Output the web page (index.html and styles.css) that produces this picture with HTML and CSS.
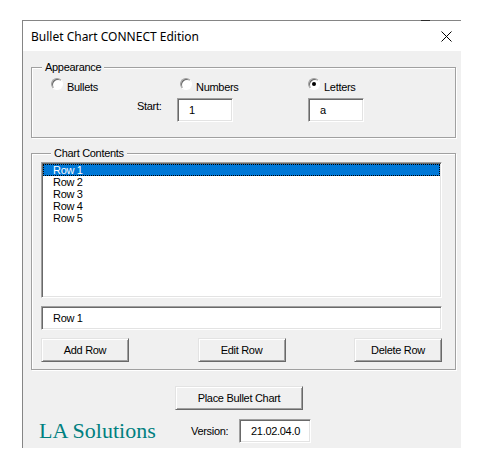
FILE: index.html
```html
<!DOCTYPE html>
<html>
<head>
<meta charset="utf-8">
<link rel="stylesheet" href="styles.css">
</head>
<body>
<div class="window">
  <div class="titlebar">
    <span class="title">Bullet Chart CONNECT Edition</span>
    <svg class="close" width="11" height="11" viewBox="0 0 11 11"><path d="M0.5 0.5L10.5 10.5M10.5 0.5L0.5 10.5" stroke="#000" stroke-width="1" fill="none"/></svg>
  </div>
  <div class="client">
    <fieldset class="group appearance">
      <legend>Appearance</legend>
      <div class="app-grid">
        <label class="radio r-bullets"><span class="circle"></span><span class="rlabel">Bullets</span></label>
        <label class="radio r-numbers"><span class="circle"></span><span class="rlabel">Numbers</span></label>
        <label class="radio r-letters"><span class="circle checked"></span><span class="rlabel">Letters</span></label>
        <span class="start-label">Start:</span>
        <span class="field f-start">1</span>
        <span class="field f-letters">a</span>
      </div>
    </fieldset>

    <fieldset class="group contents">
      <legend>Chart Contents</legend>
      <div class="listbox">
        <div class="item selected">Row 1</div>
        <div class="item">Row 2</div>
        <div class="item">Row 3</div>
        <div class="item">Row 4</div>
        <div class="item">Row 5</div>
      </div>
      <div class="field f-row">Row 1</div>
      <div class="btn-row">
        <button class="btn">Add Row</button>
        <button class="btn">Edit Row</button>
        <button class="btn">Delete Row</button>
      </div>
    </fieldset>

    <button class="btn place">Place Bullet Chart</button>

    <div class="footer">
      <span class="brand">LA Solutions</span>
      <span class="version-label">Version:</span>
      <span class="field f-version">21.02.04.0</span>
    </div>
  </div>
</div>
</body>
</html>
```

FILE: styles.css
```css
html, body {
  margin: 0;
  background: #ffffff;
}

body {
  font-family: "Liberation Sans", Arial, sans-serif;
  font-size: 11px;
  letter-spacing: -0.3px;
  color: #000;
}

.window {
  position: relative;
  margin: 20px 0 0 22px;
  width: 438px;
  height: 427px;
  border-top: 1px solid #858585;
  border-left: 1px solid #858585;
  display: flex;
  flex-direction: column;
}

.window::after {
  content: "";
  position: absolute;
  top: -1px;
  left: 398px;
  width: 9px;
  height: 1px;
  background: #2b2b2b;
}

.titlebar {
  height: 30px;
  flex: none;
  display: flex;
  align-items: center;
  justify-content: space-between;
  padding: 0 9px 0 8px;
  background: #fff;
}

.title {
  font-family: "Noto Sans", "Open Sans", sans-serif;
  font-size: 12px;
  letter-spacing: 0;
  color: #000;
}

.close {
  display: block;
}

.client {
  flex: 1;
  background: #f0f0f0;
  display: flex;
  flex-direction: column;
  align-items: flex-start;
  padding: 0 5px 0 8px;
}

.group {
  margin: 0;
  padding: 0;
  width: 425px;
  box-sizing: border-box;
  min-width: 0;
  border: 1px solid #a0a0a0;
  box-shadow: inset 1px 1px 0 #fff, 1px 1px 0 #fff;
}

.group legend {
  margin-left: 10px;
  padding: 0 3px;
  line-height: 13px;
  background: #f0f0f0;
}

.appearance {
  margin-top: 10px;
  height: 77px;
}

.app-grid {
  display: grid;
  grid-template-columns: 19px 86px 40px 131px 1fr;
  grid-template-rows: 13px 24px;
  row-gap: 7px;
  padding-top: 4px;
}

.radio {
  display: flex;
  align-items: flex-start;
  gap: 4px;
}

.r-bullets { grid-column: 2 / 4; grid-row: 1; }
.r-numbers { grid-column: 4; grid-row: 1; margin-left: 3px; }
.r-letters { grid-column: 5; grid-row: 1; }

.circle {
  width: 12px;
  height: 12px;
  box-sizing: border-box;
  border-radius: 50%;
  border: 1px solid;
  border-color: #a0a0a0 #ffffff #ffffff #a0a0a0;
  box-shadow: inset 1px 1px 0 #696969;
  background: #fff;
  flex: none;
  display: flex;
  align-items: center;
  justify-content: center;
}

.circle.checked::before {
  content: "";
  width: 4px;
  height: 4px;
  border-radius: 50%;
  background: #000;
}

.rlabel {
  padding-top: 3px;
  line-height: 13px;
}

.start-label {
  grid-column: 3;
  grid-row: 2;
  line-height: 13px;
  padding-top: 2px;
}

.field {
  box-sizing: border-box;
  height: 24px;
  background: #fff;
  border: 1px solid;
  border-color: #a0a0a0 #ffffff #ffffff #a0a0a0;
  box-shadow: inset 1px 1px 0 #696969, inset -1px -1px 0 #e3e3e3;
  display: flex;
  align-items: center;
  padding-left: 11px;
  line-height: 13px;
}

.f-start { grid-column: 4; grid-row: 2; width: 56px; }
.f-letters { grid-column: 5; grid-row: 2; width: 56px; }

.contents {
  margin-top: 9px;
  height: 223px;
  padding: 2px 0 0 9px;
}

.listbox {
  box-sizing: border-box;
  width: 401px;
  height: 136px;
  background: #fff;
  border: 1px solid;
  border-color: #a0a0a0 #ffffff #ffffff #a0a0a0;
  box-shadow: inset 1px 1px 0 #696969, inset -1px -1px 0 #e3e3e3;
  padding: 1px;
}

.item {
  height: 12px;
  line-height: 12px;
  padding-left: 10px;
}

.item.selected {
  background: #0078d7;
  color: #fff;
  outline: 1px dotted #000;
  outline-offset: -1px;
}

.f-row {
  width: 401px;
  margin-top: 8px;
}

.btn-row {
  width: 401px;
  margin-top: 8px;
  display: flex;
  justify-content: space-between;
}

.btn {
  box-sizing: border-box;
  width: 88px;
  height: 24px;
  margin: 0;
  padding: 0;
  font-family: inherit;
  font-size: 11px;
  letter-spacing: -0.3px;
  color: #000;
  background: #f0f0f0;
  border: 1px solid;
  border-color: #e3e3e3 #696969 #696969 #e3e3e3;
  box-shadow: inset 1px 1px 0 #ffffff, inset -1px -1px 0 #a0a0a0;
}

.place {
  width: 128px;
  margin: 16px 0 0 144px;
}

.footer {
  margin-top: 8px;
  display: flex;
  align-items: center;
  width: 100%;
}

.brand {
  font-family: "Liberation Serif", "Times New Roman", serif;
  font-size: 22px;
  letter-spacing: 0;
  color: #008080;
  margin-left: 8px;
  width: 152px;
}

.version-label {
  width: 48px;
}

.f-version {
  width: 72px;
}
```
